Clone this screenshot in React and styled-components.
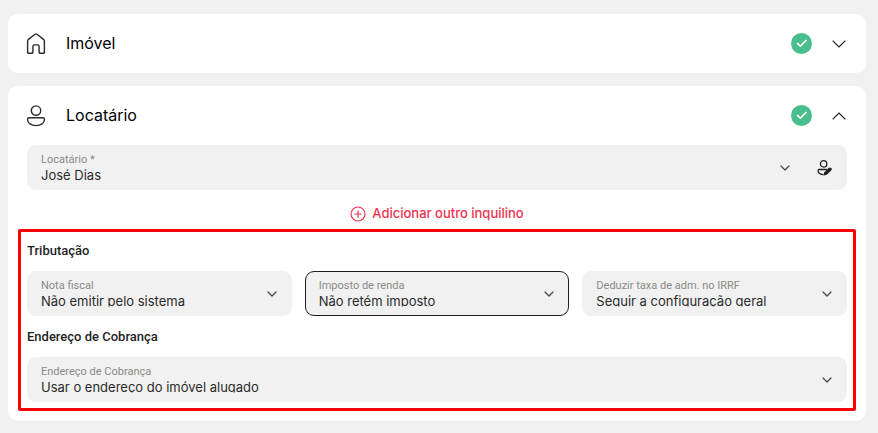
import React, { useState } from 'react';
import styled, { createGlobalStyle } from 'styled-components';

const GlobalStyle = createGlobalStyle`
    * {
        box-sizing: border-box;
    }

    body {
        margin: 0;
        background-color: #f1f1f1;
        color: #1f1f1f;
        font-family: Inter, Roboto, sans-serif;
    }

    button,
    select {
        font: inherit;
    }
`;

const Page = styled.main`
    display: flex;
    flex-direction: column;
    gap: 13px;
    padding: 14px 12px 12px 8px;
`;

const Card = styled.section`
    padding: 0 10px ${({ $open }) => ($open ? '10px' : '0')};
    background-color: white;
    border-radius: 10px;
`;

const CardHeader = styled.button`
    width: 100%;
    height: 59px;
    padding: 0 10px 0 8px;
    display: flex;
    align-items: center;
    gap: 20px;
    border: none;
    background: none;
    color: #2b2b2b;
    text-align: left;
    cursor: pointer;
`;

const CardTitle = styled.span`
    flex: 1;
    padding-bottom: 2px;
    color: black;
    font-size: 16px;
    line-height: 20px;
`;

const TenantRow = styled.div`
    padding: 0 9px;
`;

const FieldBox = styled.div`
    height: 45px;
    padding: 0 14px 0 13px;
    display: flex;
    align-items: center;
    border: 1px solid ${({ $active }) => ($active ? '#1f1f1f' : '#f1f1f1')};
    border-radius: 9px;
    background-color: #f1f1f1;
    color: #444444;
`;

const FieldText = styled.div`
    flex: 1;
    min-width: 0;
    padding-bottom: 1px;
    display: flex;
    flex-direction: column;
`;

const FieldLabel = styled.label`
    color: #8a8a8a;
    font-family: Roboto, sans-serif;
    font-size: 11px;
    line-height: 15px;
    white-space: nowrap;
`;

const FieldSelect = styled.select`
    appearance: none;
    width: 100%;
    height: 16px;
    padding: 0;
    border: none;
    outline: none;
    background: none;
    color: #2b2b2b;
    font-size: 13px;
    line-height: 16px;
    clip-path: inset(0 0 2px 0);
`;

const EditButton = styled.button`
    margin-left: 27px;
    padding: 0;
    display: flex;
    border: none;
    background: none;
    color: #1f1f1f;
    cursor: pointer;
`;

const AddButton = styled.button`
    margin: 15px auto 7px;
    padding: 0;
    display: flex;
    align-items: center;
    gap: 6px;
    border: none;
    background: none;
    color: #f0324f;
    font-size: 13px;
    font-weight: 500;
    line-height: 17px;
    cursor: pointer;
`;

const Highlight = styled.div`
    padding: 10px 6px 6px;
    border: 3px solid #ff0000;
    border-radius: 2px;
`;

const SectionTitle = styled.h3`
    margin: 0 0 12px;
    font-family: Roboto, sans-serif;
    font-size: 13px;
    font-weight: 500;
    line-height: 17px;
`;

const FieldGrid = styled.div`
    margin-bottom: 12px;
    display: grid;
    grid-template-columns: repeat(3, minmax(0, 1fr));
    gap: 13px;
`;

const Icon = styled.svg`
    flex: none;
    fill: none;
    stroke: currentColor;
    stroke-linecap: round;
    stroke-linejoin: round;
`;

function HomeIcon() {
    return (
        <Icon width="20" height="22" viewBox="0 0 20 22" strokeWidth="1.4">
            <path d="M1.6 19.6V8.2Q1.6 7.3 2.3 6.6L9 1.3Q10 .5 11 1.3L17.7 6.6Q18.4 7.3 18.4 8.2V19.6Q18.4 20.2 17.8 20.2H13.7Q13.1 20.2 13.1 19.6V13.6Q13.1 11.9 11.5 11.9H8.5Q6.9 11.9 6.9 13.6V19.6Q6.9 20.2 6.3 20.2H2.2Q1.6 20.2 1.6 19.6Z" />
        </Icon>
    );
}

function PersonIcon() {
    return (
        <Icon width="20" height="22" viewBox="0 0 20 22" strokeWidth="1.4">
            <circle cx="10" cy="5.6" r="4.7" />
            <path d="M3.2 12.8H16.8Q18.5 12.8 18.5 14.4C18.5 18.2 14.7 20.6 10 20.6S1.5 18.2 1.5 14.4Q1.5 12.8 3.2 12.8Z" />
        </Icon>
    );
}

function CheckIcon() {
    return (
        <Icon width="21" height="21" viewBox="0 0 21 21">
            <circle cx="10.5" cy="10.5" r="10.5" fill="#4abd8c" stroke="none" />
            <path d="M6.5 10.4L9.3 13.1L15 7.4" stroke="white" strokeWidth="1.6" />
        </Icon>
    );
}

function HeaderChevron({ up }) {
    return (
        <Icon width="14" height="8" viewBox="0 0 14 8" strokeWidth="1.1">
            <path d={up ? 'M1 7L7 1L13 7' : 'M1 1L7 7L13 1'} />
        </Icon>
    );
}

function FieldChevron() {
    return (
        <Icon width="10" height="6" viewBox="0 0 10 6" strokeWidth="1.2">
            <path d="M1 1L5 5L9 1" />
        </Icon>
    );
}

function EditPersonIcon() {
    return (
        <Icon width="15" height="16" viewBox="-1 0 15 16" strokeWidth="1.3">
            <circle cx="5.6" cy="3.9" r="3.2" />
            <path d="M8.4 9.5H1.2Q.1 9.5 .1 10.5C.1 13 2.4 14.4 5 14.6" />
            <path d="M5.6 15.6L6.1 12.4L10.6 8.1Q12 6.9 13.2 8.1T13.2 10.4L8.7 14.8Z" fill="currentColor" stroke="none" />
        </Icon>
    );
}

function PlusIcon() {
    return (
        <Icon width="16" height="16" viewBox="0 0 16 16" strokeWidth="1.2">
            <circle cx="8" cy="8" r="7" />
            <path d="M8 4.8V11.2M4.8 8H11.2" />
        </Icon>
    );
}

function Field({ id, label, options, active, children }) {
    return (
        <FieldBox $active={active}>
            <FieldText>
                <FieldLabel htmlFor={id}>{label}</FieldLabel>
                <FieldSelect id={id}>
                    {options.map((option) => (
                        <option key={option}>{option}</option>
                    ))}
                </FieldSelect>
            </FieldText>
            <FieldChevron />
            {children}
        </FieldBox>
    );
}

function Panel({ icon, title, defaultOpen, children }) {
    const [open, setOpen] = useState(Boolean(defaultOpen));

    return (
        <Card $open={open && children}>
            <CardHeader type="button" aria-expanded={open} onClick={() => setOpen(!open)}>
                {icon}
                <CardTitle>{title}</CardTitle>
                <CheckIcon />
                <HeaderChevron up={open} />
            </CardHeader>
            {open && children}
        </Card>
    );
}

function App() {
    return (
        <>
            <GlobalStyle />
            <Page>
                <Panel icon={<HomeIcon />} title="Imóvel" />

                <Panel icon={<PersonIcon />} title="Locatário" defaultOpen>
                    <TenantRow>
                        <Field id="locatario" label="Locatário *" options={['José Dias']}>
                            <EditButton type="button" aria-label="Editar locatário">
                                <EditPersonIcon />
                            </EditButton>
                        </Field>
                    </TenantRow>

                    <AddButton type="button">
                        <PlusIcon />
                        Adicionar outro inquilino
                    </AddButton>

                    <Highlight>
                        <SectionTitle>Tributação</SectionTitle>
                        <FieldGrid>
                            <Field id="nota-fiscal" label="Nota fiscal" options={['Não emitir pelo sistema']} />
                            <Field id="imposto-renda" label="Imposto de renda" options={['Não retém imposto']} active />
                            <Field id="taxa-irrf" label="Deduzir taxa de adm. no IRRF" options={['Seguir a configuração geral']} />
                        </FieldGrid>

                        <SectionTitle>Endereço de Cobrança</SectionTitle>
                        <Field id="endereco" label="Endereço de Cobrança" options={['Usar o endereço do imóvel alugado']} />
                    </Highlight>
                </Panel>
            </Page>
        </>
    );
}

export default App;
